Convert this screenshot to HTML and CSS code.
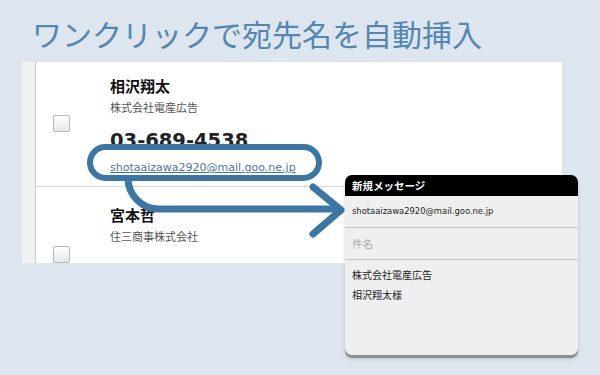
FILE: index.html
```html
<!DOCTYPE html>
<html lang="ja">
<head>
    <meta charset="UTF-8">
    <title>ワンクリックで宛先名を自動挿入</title>
    <link rel="stylesheet" href="styles.css">
</head>
<body>
<h1 class="title">ワンクリックで宛先名を自動挿入</h1>

<!-- 連絡先リスト -->
<div class="card">
    <div class="card-strip"></div>
    <div class="card-list">
        <div class="contact">
            <div class="check-col"><span class="checkbox"></span></div>
            <div class="info">
                <div class="name">相沢翔太</div>
                <div class="company">株式会社電産広告</div>
                <div class="phone">03-689-4538</div>
                <div class="mail-oval"><a href="javascript:void(0);">shotaaizawa2920@mail.goo.ne.jp</a></div>
            </div>
        </div>
        <div class="contact contact-second">
            <div class="check-col"><span class="checkbox"></span></div>
            <div class="info">
                <div class="name">宮本哲</div>
                <div class="company">住三商事株式会社</div>
            </div>
        </div>
    </div>
</div>

<!-- 矢印 -->
<svg class="arrow" width="600" height="375" viewBox="0 0 600 375">
    <path d="M128 178 A31 31 0 0 0 159 209 L338 209" fill="none" stroke="#3b77a6" stroke-width="7"/>
    <path d="M313 187 L341 210 L313 234" fill="none" stroke="#3b77a6" stroke-width="7" stroke-linecap="round" stroke-linejoin="round"/>
</svg>

<!-- 新規メッセージ -->
<div class="compose">
    <div class="compose-head">新規メッセージ</div>
    <div class="compose-row">shotaaizawa2920@mail.goo.ne.jp</div>
    <div class="compose-row compose-subject">件名</div>
    <div class="compose-body">
        <div>株式会社電産広告</div>
        <div>相沢翔太様</div>
    </div>
</div>
</body>
</html>
```

FILE: styles.css
```css
body {
    margin: 0;
    background-color: #dde6ee;
    font-family: "Noto Sans CJK JP", sans-serif;
    color: #111;
}

/* Заголовок */
.title {
    margin: 0;
    padding: 16px 0 0 32px;
    height: 46px;
    font-size: 30px;
    line-height: 34px;
    font-weight: 400;
    color: #5287b2;
}

/* Список контактов */
.card {
    margin-left: 22px;
    width: 540px;
    height: 201px;
    background-color: #fff;
    display: flex;
    overflow: hidden;
}

.card-strip {
    width: 13px;
    background-color: #f1f1f1;
    border-right: 1px solid #c9c9c9;
    flex-shrink: 0;
}

.card-list {
    flex: 1;
}

.contact {
    display: flex;
    height: 110px;
    padding-top: 14px;
    border-bottom: 1px solid #d9d9d9;
}

.contact-second {
    height: 130px;
    padding-top: 18px;
}

.check-col {
    width: 74px;
    flex-shrink: 0;
    padding-left: 17px;
    box-sizing: border-box;
    padding-top: 39px;
}

.contact-second .check-col {
    padding-top: 41px;
}

.checkbox {
    display: block;
    width: 15px;
    height: 15px;
    border: 1px solid #b8b8b8;
    border-radius: 2px;
    background: linear-gradient(#ffffff, #e6e6e6);
}

.name {
    font-size: 15px;
    line-height: 20px;
    font-weight: 700;
}

.company {
    margin-top: 4px;
    font-size: 11px;
    line-height: 14px;
    color: #555;
}

.phone {
    margin-top: 15px;
    font-family: "DejaVu Sans", sans-serif;
    font-size: 19.5px;
    line-height: 24px;
    font-weight: 700;
    color: #222;
}

.mail-oval {
    position: relative;
    margin: -9px 0 0 -23px;
    width: 206px;
    height: 23px;
    padding: 2px 0 0 17px;
    border: 6px solid #3b77a6;
    border-radius: 20px;
    background-color: #fff;
}

.mail-oval a {
    font-family: "DejaVu Sans", sans-serif;
    font-size: 11px;
    line-height: 13px;
    color: #4a76a3;
}

/* Стрелка */
.arrow {
    position: absolute;
    top: 0;
    left: 0;
}

/* Окно нового сообщения */
.compose {
    position: absolute;
    left: 345px;
    top: 175px;
    width: 233px;
    height: 180px;
    background-color: #efefef;
    border-radius: 7px;
    box-shadow: 0 3px 0 #8b9196, 0 4px 4px rgba(0, 0, 0, 0.15);
    overflow: hidden;
    font-size: 10px;
    color: #222;
}

.compose-head {
    height: 21px;
    line-height: 21px;
    padding-left: 7px;
    background-color: #000;
    color: #fff;
    font-size: 10.5px;
    font-weight: 700;
}

.compose-row {
    height: 31px;
    line-height: 31px;
    padding-left: 7px;
    border-bottom: 1px solid #c6c6c6;
    font-family: "DejaVu Sans", sans-serif;
    font-size: 8.4px;
}

.compose-subject {
    font-family: "Noto Sans CJK JP", sans-serif;
    font-size: 10.5px;
    color: #a9a9a9;
}

.compose-body {
    padding: 5px 0 0 7px;
    line-height: 20px;
}
```
